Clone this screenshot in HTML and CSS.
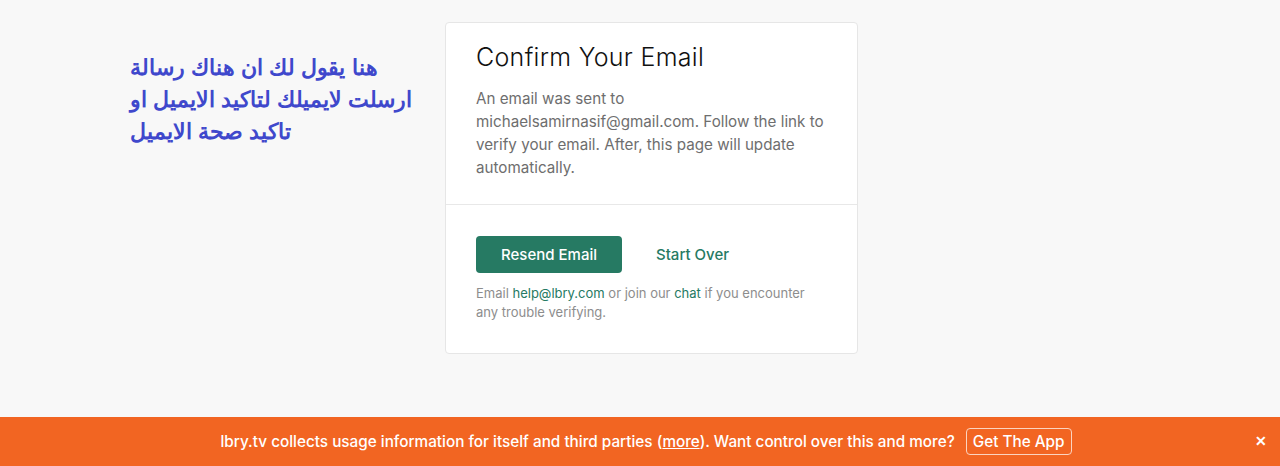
FILE: index.html
```html
<!DOCTYPE html>
<html lang="en">
<head>
    <meta charset="UTF-8">
    <meta name="viewport" content="width=device-width, initial-scale=1.0">
    <link rel="stylesheet" href="styles.css">
    <title>Confirm Your Email</title>
</head>
<body>
    <div class="page">
        <div class="main">
            <div class="note" dir="rtl">هنا يقول لك ان هناك رسالة<br>ارسلت لايميلك لتاكيد الايميل او<br>تاكيد صحة الايميل</div>
            <div class="card">
                <div class="card-section">
                    <h1>Confirm Your Email</h1>
                    <p class="card-text">An email was sent to michaelsamirnasif@gmail.com. Follow the link to verify your email. After, this page will update automatically.</p>
                </div>
                <div class="card-section card-actions">
                    <div class="buttons">
                        <button class="btn-primary">Resend Email</button>
                        <button class="btn-link">Start Over</button>
                    </div>
                    <p class="help">Email <a href="#">help@lbry.com</a> or join our <a href="#">chat</a> if you encounter any trouble verifying.</p>
                </div>
            </div>
        </div>
        <div class="banner">
            <div class="banner-text">lbry.tv collects usage information for itself and third parties (<a href="#">more</a>). Want control over this and more?</div>
            <a class="banner-btn" href="#">Get The App</a>
            <span class="banner-close">&#x2715;</span>
        </div>
    </div>
</body>
</html>
```

FILE: styles.css
```css
body {
    margin: 0;
    padding: 0;
    background-color: #f8f8f8;
    font-family: Inter, "Noto Sans", sans-serif;
}

.page {
    height: 466px;
    display: flex;
    flex-direction: column;
    justify-content: space-between;
}

.main {
    display: flex;
    align-items: flex-start;
    padding: 22px 0 0 130px;
}

.note {
    width: 300px;
    margin-top: 30px;
    margin-right: 15px;
    text-align: left;
    white-space: nowrap;
    font-family: "Liberation Sans", Arial, sans-serif;
    font-weight: bold;
    font-size: 22px;
    line-height: 32px;
    color: #3f48cc;
}

.card {
    width: 411px;
    background-color: #fff;
    border: 1px solid #e6e6e6;
    border-radius: 4px;
}

.card-section {
    padding: 18px 25px 25px 30px;
}

.card-section + .card-section {
    border-top: 1px solid #e8e8e8;
}

h1 {
    margin: 0;
    font-size: 25px;
    font-weight: 300;
    letter-spacing: 0.3px;
    line-height: 32px;
    color: #111;
}

.card-text {
    margin: 14px 0 0;
    font-size: 15.2px;
    line-height: 23px;
    color: #6e6e6e;
}

.card-actions {
    padding-top: 31px;
    padding-bottom: 31px;
}

.buttons {
    display: flex;
    align-items: center;
}

.btn-primary {
    width: 146px;
    height: 37px;
    background-color: #267a63;
    color: #fff;
    border: none;
    border-radius: 4px;
    font-family: inherit;
    font-size: 15px;
    font-weight: 500;
    cursor: pointer;
}

.btn-link {
    margin-left: 34px;
    padding: 0;
    background: none;
    border: none;
    color: #267a63;
    font-family: inherit;
    font-size: 15px;
    font-weight: 500;
    cursor: pointer;
}

.help {
    max-width: 335px;
    margin: 11px 0 0;
    font-size: 13px;
    line-height: 19px;
    color: #8d8d8d;
}

.help a {
    color: #267a63;
    text-decoration: none;
}

.banner {
    height: 49px;
    background-color: #f26522;
    display: flex;
    align-items: center;
    justify-content: center;
    color: #fff;
    font-size: 15.3px;
    font-weight: 500;
    position: relative;
}

.banner-text {
    margin-left: 12px;
}

.banner-text a {
    color: #fff;
}

.banner-btn {
    margin-left: 11px;
    padding: 3px 6px;
    border: 1px solid #fbd3c0;
    border-radius: 4px;
    color: #fff;
    text-decoration: none;
}

.banner-close {
    position: absolute;
    right: 13px;
    top: 15px;
    font-size: 14px;
    font-weight: bold;
}
```
